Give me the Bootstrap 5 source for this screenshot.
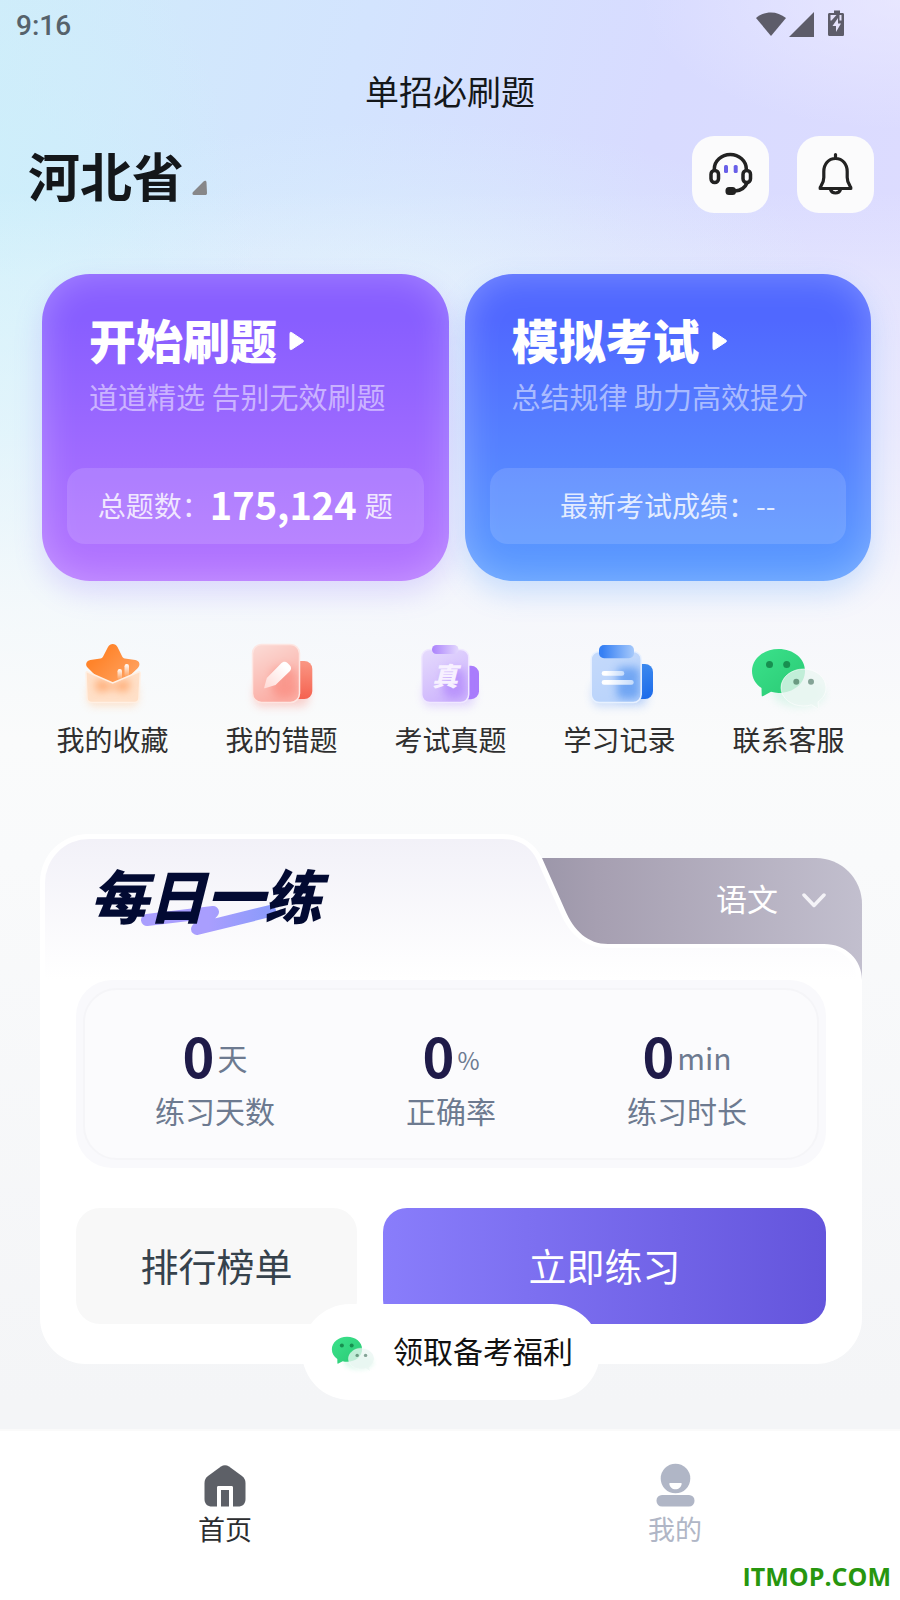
<!DOCTYPE html>
<html lang="zh-CN">
<head>
<meta charset="utf-8">
<meta name="viewport" content="width=device-width, initial-scale=1">
<title>单招必刷题</title>
<link href="https://cdn.jsdelivr.net/npm/bootstrap@5.3.0/dist/css/bootstrap.min.css" rel="stylesheet">
<style>
  body {
    font-family: "Noto Sans CJK SC", "Noto Sans", sans-serif;
    color: #14171a;
    min-height: 100vh;
    background:
      linear-gradient(180deg, rgba(250,251,251,0) 0, rgba(250,251,251,0) 190px, rgba(250,251,251,.25) 280px, rgba(250,251,251,.45) 430px, rgba(250,251,251,.86) 610px, #fafbfb 740px, #f9fafb 860px, #f4f5f7 1400px),
      radial-gradient(ellipse 300px 480px at -40px 330px, #cdf0fb 0, rgba(205,240,251,0) 100%),
      radial-gradient(ellipse 420px 150px at 400px 270px, rgba(221,240,252,.7) 0, rgba(221,240,252,0) 100%),
      radial-gradient(ellipse 260px 130px at 900px 0, rgba(240,238,255,.6) 0, rgba(240,238,255,0) 100%),
      linear-gradient(105deg, #d0ecfa 0, #d3e4fe 28%, #d8dbff 52%, #dedcff 80%, #e0dcff 100%);
  }
  .status-bar { height: 46px; padding: 5px 55px 0 16px; font: 500 28px/46px Roboto, sans-serif; color: #56626b; }
  .page-title { font-size: 34px; line-height: 90px; font-weight: 400; }
  .top-row { padding: 0 26px 0 28px; }
  .province { font-size: 52px; line-height: 74px; font-weight: 700; color: #14171a; }
  .tool-btn { width: 77px; height: 77px; border-radius: 22px; background: #fbfbfc; }
  .hero-row { padding: 61px 29px 0 42px; }
  .hero { height: 307px; border-radius: 48px; padding: 38px 25px 37px; color: #fff; }
  .hero-start { background: linear-gradient(180deg, #885eff 15%, #b576ff 100%); box-shadow: inset 0 0 36px rgba(255,255,255,.26), 0 12px 28px rgba(137,110,255,.22); }
  .hero-exam { background: linear-gradient(180deg, #5068ff 15%, #5b9cff 100%); box-shadow: inset 0 0 36px rgba(255,255,255,.26), 0 12px 28px rgba(80,160,255,.26); }
  .hero-name { font-size: 47px; line-height: 54px; font-weight: 900; }
  .hero-note { font-size: 29px; line-height: 48px; padding-top: 6px; color: rgba(255,255,255,.52); }
  .hero-head { padding: 0 22px; }
  .hero-pill { height: 76px; padding-bottom: 2px; border-radius: 18px; background: rgba(255,255,255,.13); font-size: 28px; color: rgba(255,255,255,.82); white-space: nowrap; }
  .hero-pill strong { font-size: 38px; line-height: 74px; padding-bottom: 2px; color: #fff; }
  .quick-row { padding: 51px 27px 0 28px; }
  .quick-row a { color: #2f2f2f; font-size: 28px; line-height: 46px; }
  .daily { margin: 72px 38px 65px 40px; }
  .daily-head { height: 146px; padding: 28px 36px 0 50px; }
  .daily-shape { position: absolute; inset: 0; width: 100%; height: 100%; }
  .daily-name { font-size: 58px; line-height: 64px; font-weight: 900; font-style: italic; color: #020a32; }
  .daily-line { position: absolute; left: 50px; top: 60px; }
  .subject select { appearance: none; border: 0; padding: 0; width: 68px; height: 48px; background: transparent; color: #fff; font-size: 31px; line-height: 48px; }
  .subject option { color: #14171a; }
  .subject { gap: 18px; padding-top: 12px; }
  .daily-body { background: #fff; border-radius: 0 0 46px 46px; padding: 0 36px 40px; }
  .stats { background: #f9f9fc; border-radius: 36px; padding: 8px 7px; }
  .stats-in { border: 2px solid #f5f5f8; border-radius: 34px; background: #fbfbfd; height: 172px; padding: 29px 12px 0; }
  .stat-val { height: 69px; line-height: 72px; font-size: 54px; color: #6d7a90; white-space: nowrap; }
  .stat-val b { color: #1f1b49; }
  .stat-val span { font-size: 30px; line-height: 30px; vertical-align: 8px; margin-left: 3px; }
  .stat-val .pct { font-size: 24px; }
  .stat-key { font-size: 30px; line-height: 44px; color: #6d7a90; }
  .acts { gap: 26px; }
  .act { height: 116px; border-radius: 24px; border: 0; font-size: 38px; padding: 0 0 4px; }
  .act-rank { background: #f8f8f8; color: #36424c; flex: 281 1 0; }
  .act-go { background: linear-gradient(90deg, #897dfb, #6455dc); color: #fff; flex: 443 1 0; }
  .welfare { position: absolute; left: 50%; bottom: -36px; transform: translateX(-50%); width: 298px; height: 96px; border-radius: 48px; background: #fff; font-size: 30px; color: #111; white-space: nowrap; padding: 0 0 3px; border: 0; }
  .tabs { background: #fff; min-height: 171px; padding-top: 29px; border-top: 2px solid #fafafa; }
  .tabs a { font-size: 27px; line-height: 38px; color: #2c2d30; }
  .tabs a.idle { color: #b0b6c6; }
  .site-mark { position: absolute; right: 9px; bottom: 6px; font: 700 25px/36px "Open Sans", sans-serif; color: #27960f; }
</style>
</head>
<body>
<svg width="0" height="0" class="position-absolute" aria-hidden="true">
  <defs>
    <linearGradient id="gGreen" x1="0" y1="0" x2="1" y2="1"><stop offset="0" stop-color="#3be28b"/><stop offset="1" stop-color="#2ac974"/></linearGradient>
    <filter id="soft" x="-50%" y="-50%" width="200%" height="200%"><feGaussianBlur stdDeviation="4"/></filter>
    <symbol id="chat" viewBox="0 0 84 84">
      <ellipse cx="52" cy="62" rx="26" ry="13" fill="#8ee8c0" opacity=".25" filter="url(#soft)"/>
      <path d="M31.500 17C16.500 17 5 27 5 39c0 7 3.500 13 9.500 17l.2 7.500c0 1 .8 1 1.600.5l7.700-4.200c2.500.7 5 1.200 7.500 1.200C46.500 61 58 51.500 58 39S46.500 17 31.500 17z" fill="url(#gGreen)"/>
      <circle cx="22.500" cy="32.500" r="3.500" fill="#178f50"/><circle cx="39.700" cy="32.500" r="3.500" fill="#178f50"/>
      <path d="M56.500 37C44 37 34 45.500 34 55.700S44 74 56.500 74c3 0 5.500-.3 8-1.200l6 3.500c.8.300 1 0 .9-.8l-.4-5.500c5-3.500 8-8.600 8-14.300C79 45.500 69 37 56.500 37z" fill="#eaf6f2" fill-opacity=".78" stroke="#fff" stroke-opacity=".6"/>
      <circle cx="49.300" cy="49.700" r="3" fill="#6b9a82"/><circle cx="64" cy="49.700" r="3" fill="#84a396"/>
    </symbol>
  </defs>
</svg>

<div class="status-bar d-flex justify-content-between align-items-center">
  <span>9:16</span>
  <svg width="90" height="30" viewBox="0 0 90 30" fill="#5d5c69" class="mb-1" aria-label="信号与电量">
    <path d="M1 9C10 1.500 22 1.500 31 9L16 27z"/><path d="M34 28L59 3v25z"/>
    <path d="M75 4h4V1.500h6V4h2.500c1 0 1.500.7 1.500 1.500v20c0 1-.6 1.500-1.500 1.500h-13c-1 0-1.500-.6-1.500-1.500v-20C73 4.700 73.600 4 74.500 4z"/>
    <path d="M75.500 6h6l-5 5.500h-1zM84.500 6h2v5.500h-2zM83 9l-5.500 8h3.500V23l5-8.500h-3z" fill="#e5e2fa"/>
  </svg>
</div>

<h1 class="page-title text-center m-0">单招必刷题</h1>

<header class="top-row d-flex align-items-center">
  <button type="button" class="province btn p-0 border-0 d-flex align-items-end me-auto">河北省
    <svg width="16" height="16" viewBox="0 0 16 16" class="ms-2 mb-3"><path d="M1 12L11.500 1.500C13 0 14.500.5 14.500 2.500L15 13c0 1.500-.5 2-2 2H2C.3 15 0 13.300 1 12z" fill="#878789"/></svg>
  </button>
  <button type="button" class="tool-btn btn p-0 border-0 me-4" aria-label="客服">
    <svg width="77" height="77" viewBox="0 0 77 77" fill="none" stroke="#222" stroke-width="3.500">
      <path d="M22.300 34v-1a16 14.500 0 0 1 32 0v1"/><rect x="19" y="34.500" width="7.500" height="12" rx="3.700"/><rect x="51" y="34.500" width="7.500" height="12" rx="3.700"/><path d="M55 47c-2 5-6 7.500-12 8"/>
      <rect x="33.500" y="51" width="10.500" height="8" rx="3.500" fill="#222" stroke="none"/><g fill="#685fe8" stroke="none"><rect x="32" y="29" width="4" height="8" rx="1.500"/><rect x="41.700" y="29" width="4" height="8" rx="1.500"/></g>
    </svg>
  </button>
  <button type="button" class="tool-btn btn p-0 border-0 ms-1" aria-label="通知">
    <svg width="77" height="77" viewBox="0 0 77 77" fill="none" stroke="#222" stroke-width="3.200" stroke-linejoin="round" stroke-linecap="round">
      <path d="M38.500 18.500v3M26.800 35.500c0-7.500 4.700-13 11.700-13s11.700 5.500 11.700 13v6c0 4 1 6 2.800 8.500 1 1.300 1.300 2 1 2.500H23c-.3-.5 0-1.200 1-2.500 1.800-2.500 2.800-4.500 2.800-8.500z"/><path d="M33.500 53.500c.8 2.500 2.700 3.500 5 3.500s4.200-1 5-3.500"/>
    </svg>
  </button>
</header>

<main>
  <section class="hero-row d-flex gap-3">
    <a href="#" class="hero hero-start d-flex flex-column justify-content-between text-decoration-none w-50">
      <div class="hero-head">
        <h2 class="hero-name m-0 d-flex align-items-center">开始刷题<svg width="20" height="20" viewBox="-4 0 20 20" class="ms-2 mt-1"><path d="M2.500 1.500l11.500 7.700c.7.500.7 1.200 0 1.700L2.500 18.500C1.500 19 1 18.500 1 17.500v-15c0-1 .5-1.600 1.500-1z" fill="#fff" stroke="#fff"/></svg></h2>
        <p class="hero-note m-0">道道精选 告别无效刷题</p>
      </div>
      <div class="hero-pill d-flex justify-content-center align-items-center">总题数：<strong>175,124</strong><span class="ps-2">题</span></div>
    </a>
    <a href="#" class="hero hero-exam d-flex flex-column justify-content-between text-decoration-none w-50">
      <div class="hero-head">
        <h2 class="hero-name m-0 d-flex align-items-center">模拟考试<svg width="20" height="20" viewBox="-4 0 20 20" class="ms-2 mt-1"><path d="M2.500 1.500l11.500 7.700c.7.500.7 1.200 0 1.700L2.500 18.500C1.500 19 1 18.500 1 17.500v-15c0-1 .5-1.600 1.500-1z" fill="#fff" stroke="#fff"/></svg></h2>
        <p class="hero-note m-0">总结规律 助力高效提分</p>
      </div>
      <div class="hero-pill d-flex justify-content-center align-items-center">最新考试成绩：--</div>
    </a>
  </section>

  <nav class="quick-row d-flex text-center" aria-label="快捷入口">
    <a href="#" class="col text-decoration-none"><svg width="84" height="84" viewBox="0 0 84 84" class="d-block mx-auto">
      <defs><linearGradient id="gStar" x1="0" y1="0" x2="1" y2=".7"><stop offset=".3" stop-color="#ff842b"/><stop offset="1" stop-color="#ffa260"/></linearGradient><linearGradient id="gBar" x1="0" y1="0" x2="0" y2="1"><stop offset="0" stop-color="#fff"/><stop offset="1" stop-color="#fff" stop-opacity="0"/></linearGradient></defs>
      <rect x="17" y="52" width="50" height="22" rx="6" fill="#ffc290" opacity=".45" filter="url(#soft)"/>
      <path d="M15 41c0-1 .7-1.500 1.700-1L41.700 51 67.500 40c1-.4 1.800.2 1.700 1.200L68 66c-.2 3-1.700 4.500-4.500 4.500H21c-3 0-4.800-1.500-5-4.500z" fill="#ffe0c8"/>
      <path d="M27 47l15 6 15-6 2 8-5 5-12-4-14 4-4-5z" fill="#ff9a58" opacity=".8" filter="url(#soft)"/>
      <path d="M37 15c2-4 7.500-4 9.500 0l4.700 9.500c.6 1.200 1.300 1.700 2.600 1.900l10.500 1.500c4.500.8 5.500 5 2.300 8.300L58.500 44 41.700 51 25 44l-8-8c-3.500-3.500-1.500-7.500 2.300-8.100L29.500 26.400c1.300-.2 2-.7 2.600-1.900z" fill="url(#gStar)"/>
      <rect x="46.500" y="37" width="4.500" height="11" rx="2.200" fill="url(#gBar)"/><rect x="53.500" y="32" width="4.500" height="13" rx="2.200" fill="url(#gBar)"/>
      <path d="M15 41c0-1 .7-1.500 1.700-1L41.700 51 67.500 40c1-.4 1.800.2 1.700 1.200L68 66c-.2 3-1.700 4.500-4.500 4.500H21c-3 0-4.800-1.500-5-4.500z" fill="none" stroke="#fff0e4" stroke-width="1.500"/>
    </svg>我的收藏</a>
    <a href="#" class="col text-decoration-none"><svg width="84" height="84" viewBox="0 0 84 84" class="d-block mx-auto">
      <defs><linearGradient id="gRed" x1="0" y1="0" x2="0" y2="1"><stop offset="0" stop-color="#fa9784"/><stop offset="1" stop-color="#f56250"/></linearGradient><linearGradient id="gRedS" x1="0" y1="0" x2=".4" y2="1"><stop offset="0" stop-color="#fbdcd7"/><stop offset="1" stop-color="#fbada4"/></linearGradient><linearGradient id="gPen" x1="1" y1="0" x2="0" y2="1"><stop offset=".2" stop-color="#fff"/><stop offset="1" stop-color="#ffd9d5"/></linearGradient></defs>
      <rect x="14" y="50" width="55" height="25" rx="8" fill="#f9897d" opacity=".35" filter="url(#soft)"/>
      <rect x="42" y="29" width="30.300" height="38" rx="8" fill="url(#gRed)"/>
      <rect x="12.500" y="12.500" width="47" height="58" rx="9" fill="url(#gRedS)"/><rect x="32" y="35" width="24" height="30" rx="8" fill="#f97c6e" opacity=".5" filter="url(#soft)"/><rect x="12.500" y="12.500" width="47" height="58" rx="9" fill="none" stroke="#fde6e2" stroke-width="1.500"/>
      <path d="M25 56.300c-.6.200-1-.3-.8-.9l2.600-9.300L41 31.500c2-2.200 4.500-2.500 6.500-.5l2 2c2.200 2 2 4.500 0 6.500L35.500 53z" fill="url(#gPen)"/>
    </svg>我的错题</a>
    <a href="#" class="col text-decoration-none"><svg width="84" height="84" viewBox="0 0 84 84" class="d-block mx-auto">
      <defs><linearGradient id="gPurS" x1="0" y1="0" x2=".5" y2="1"><stop offset="0" stop-color="#e6dcfd"/><stop offset="1" stop-color="#cdb4fc"/></linearGradient><linearGradient id="gPurC"><stop offset="0" stop-color="#ab82fc"/><stop offset="1" stop-color="#e3d8fd"/></linearGradient></defs>
      <rect x="14" y="50" width="52" height="25" rx="8" fill="#b591fd" opacity=".3" filter="url(#soft)"/>
      <rect x="42" y="33.700" width="28" height="33.500" rx="8" fill="#a97cfc"/>
      <rect x="12.700" y="17.500" width="47" height="53" rx="8" fill="url(#gPurS)"/><rect x="34" y="36" width="22" height="30" rx="8" fill="#ab7dfc" opacity=".6" filter="url(#soft)"/><rect x="12.700" y="17.500" width="47" height="53" rx="8" fill="none" stroke="#f0e8ff" stroke-width="1.500"/>
      <rect x="23" y="13" width="26.500" height="9" rx="4.500" fill="url(#gPurC)"/>
      <text x="23" y="54" font-size="26" font-weight="900" font-style="italic" fill="#f7f1ff">真</text>
    </svg>考试真题</a>
    <a href="#" class="col text-decoration-none"><svg width="84" height="84" viewBox="0 0 84 84" class="d-block mx-auto">
      <defs><linearGradient id="gBluS" x1="0" y1="0" x2=".5" y2="1"><stop offset="0" stop-color="#c5dafb"/><stop offset="1" stop-color="#b9d3fb"/></linearGradient><linearGradient id="gBluC"><stop offset=".1" stop-color="#3680f4"/><stop offset="1" stop-color="#a6c9fb"/></linearGradient><linearGradient id="gBluB" x1="0" y1="0" x2="0" y2="1"><stop offset="0" stop-color="#3b88ee"/><stop offset="1" stop-color="#1c6aea"/></linearGradient><linearGradient id="gLine"><stop offset=".2" stop-color="#fff"/><stop offset="1" stop-color="#c4dbfb"/></linearGradient></defs>
      <rect x="14" y="50" width="56" height="25" rx="8" fill="#6c9ef5" opacity=".3" filter="url(#soft)"/>
      <rect x="46" y="32" width="29" height="35" rx="8" fill="url(#gBluB)"/>
      <rect x="13.200" y="19.500" width="50" height="51" rx="8" fill="url(#gBluS)"/><rect x="39" y="35" width="23" height="32" rx="5" fill="#3f87ee" opacity=".6" filter="url(#soft)"/><rect x="13.200" y="19.500" width="50" height="51" rx="8" fill="none" stroke="#e8f1ff" stroke-width="1.500"/>
      <rect x="21" y="13" width="35" height="13.300" rx="5" fill="url(#gBluC)"/>
      <rect x="23.700" y="39" width="22.600" height="4.700" rx="2.300" fill="url(#gLine)"/><rect x="23.700" y="48" width="32" height="4.700" rx="2.300" fill="url(#gLine)"/>
    </svg>学习记录</a>
    <a href="#" class="col text-decoration-none"><svg width="84" height="84" class="d-block mx-auto"><use href="#chat"/></svg>联系客服</a>
  </nav>

  <section class="daily position-relative">
    <div class="daily-head position-relative d-flex justify-content-between align-items-start">
      <svg class="daily-shape" viewBox="0 0 822 146" preserveAspectRatio="none" aria-hidden="true">
        <defs><linearGradient id="gTab"><stop offset="0" stop-color="#9a95a8"/><stop offset=".2" stop-color="#a69fb1"/><stop offset="1" stop-color="#c2bfce"/></linearGradient><linearGradient id="gHead" x1="0" y1="0" x2="0" y2="1"><stop offset="0" stop-color="#f2f1f8"/><stop offset="1" stop-color="#fff"/></linearGradient></defs>
        <path d="M490 24H776a46 46 0 0 1 46 46V146H490z" fill="url(#gTab)"/>
        <path d="M0 146V48A48 48 0 0 1 48 0H462C480 0 494 8 502 24L525 76C534 97 548 110 568 110H784C806 110 822 126 822 146z" fill="#fff"/>
        <path d="M5 146V49A44 44 0 0 1 49 5H462C479 5 490 12 497 26L520 78C530 102 546 114 568 114H784C802 114 816 127 817 146z" fill="url(#gHead)"/>
      </svg>
      <svg class="daily-line" width="190" height="46" viewBox="0 0 190 46" fill="none" aria-hidden="true"><defs><linearGradient id="gMark" x1="0" x2="1"><stop offset=".5" stop-color="#a99efe"/><stop offset="1" stop-color="#8b9bfb"/></linearGradient></defs><path d="M57 26L123 18 107 35 180 17" stroke="url(#gMark)" stroke-width="12" stroke-linecap="round" stroke-linejoin="round"/></svg>
      <h2 class="daily-name m-0 position-relative">每日一练</h2>
      <div class="subject position-relative d-flex align-items-center">
        <select id="subject" aria-label="科目"><option>语文</option></select>
        <svg width="24" height="16" viewBox="0 0 24 16" fill="none" stroke="#f4f3f7" stroke-width="3.500" stroke-linecap="round" stroke-linejoin="round" class="mt-1" aria-hidden="true"><path d="M2 3l10 10.500L22 3"/></svg>
      </div>
    </div>
    <div class="daily-body">
      <div class="stats">
        <div class="stats-in d-flex text-center">
          <div class="col"><div class="stat-val"><b>0</b><span>天</span></div><div class="stat-key">练习天数</div></div>
          <div class="col"><div class="stat-val"><b>0</b><span class="pct">%</span></div><div class="stat-key">正确率</div></div>
          <div class="col"><div class="stat-val"><b>0</b><span>min</span></div><div class="stat-key">练习时长</div></div>
        </div>
      </div>
      <div class="acts d-flex pt-3 mt-4">
        <button type="button" class="act act-rank">排行榜单</button>
        <button type="button" class="act act-go">立即练习</button>
      </div>
    </div>
    <button type="button" class="welfare d-flex justify-content-center align-items-center gap-3"><svg width="48" height="48"><use href="#chat" width="48" height="48"/></svg>领取备考福利</button>
  </section>
</main>

<footer class="tabs position-relative d-flex text-center">
  <a href="#" class="col text-decoration-none"><svg width="50" height="50" viewBox="0 0 50 50" class="d-block mx-auto">
    <path d="M21 6.500c2.500-1.800 5.500-1.800 8 0L42 16c2.500 2 3.500 4 3.500 7v16c0 5-3 7.500-7.500 7.500H12c-4.500 0-7.500-2.500-7.500-7.500V23c0-3 1-5 3.500-7z" fill="#5d6067"/><path d="M17 47V27.500c0-1 .6-1.500 1.500-1.500h13c1 0 1.500.6 1.500 1.500V47h-4V30h-8v17z" fill="#fff"/>
  </svg>首页</a>
  <a href="#" class="idle col text-decoration-none"><svg width="50" height="50" viewBox="0 0 50 50" class="d-block mx-auto">
    <circle cx="25.500" cy="18.500" r="14.800" fill="#b0b6c6"/><path d="M20 23h11c.5 0 .8.300.7.800-.4 3.500-3 5.500-6.200 5.500s-5.800-2-6.200-5.500c0-.5.200-.8.700-.8z" fill="#fff"/><rect x="6.500" y="35" width="38" height="11.500" rx="5.500" fill="#b0b6c6"/>
  </svg>我的</a>
  <span class="site-mark">ITMOP.COM</span>
</footer>
<script src="https://cdn.jsdelivr.net/npm/bootstrap@5.3.0/dist/js/bootstrap.bundle.min.js"></script>
</body>
</html>
